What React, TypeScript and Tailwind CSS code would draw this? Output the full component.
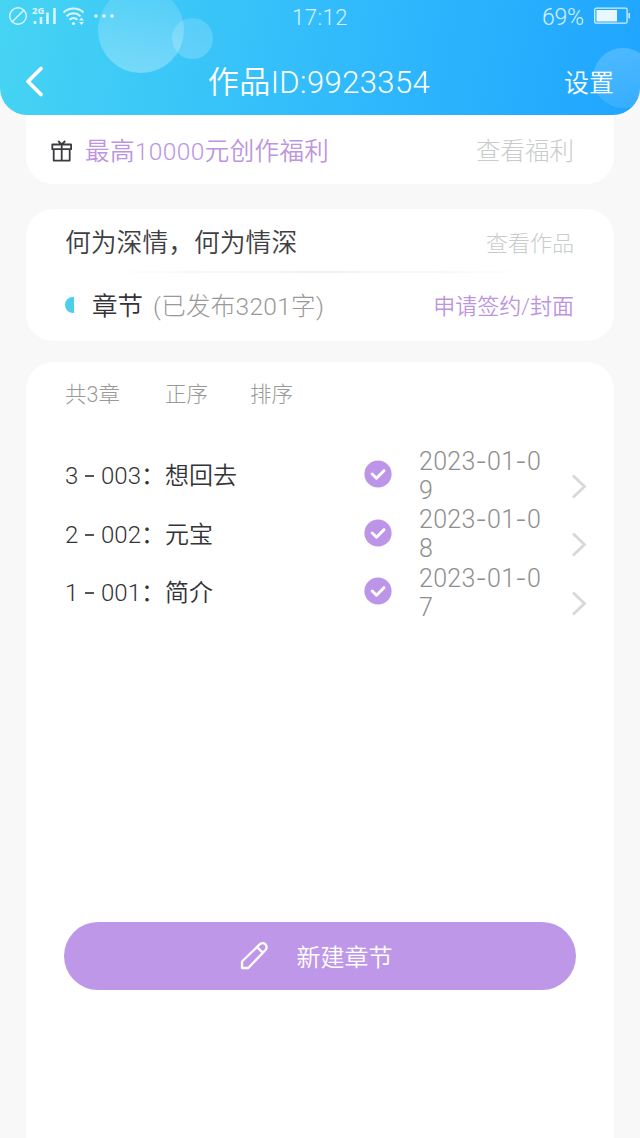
import type { ReactNode } from "react";

const chapters = [
    { order: "3", no: "003", title: "想回去", date: "2023-01-09" },
    { order: "2", no: "002", title: "元宝", date: "2023-01-08" },
    { order: "1", no: "001", title: "简介", date: "2023-01-07" },
];

function StatusBar() {
    return (
        <div className="flex h-8 items-center text-white/80 relative">
            <svg className="ml-[8px]" width="110" height="32" viewBox="0 0 110 32" fill="none" stroke="currentColor">
                <circle cx="10" cy="16" r="8.3" strokeWidth="1.4" />
                <path d="M4.5 21.5 15.5 10.5" strokeWidth="1.4" />
                {/* Signal */}
                <path d="M27 21v3M33 17v7M39.5 12.5V24M46.5 8v16" strokeWidth="2.6" />
                <text x="24" y="14" fontSize="9.5" fontWeight="700" fill="currentColor" stroke="none" className="font-['Open_Sans',sans-serif]">2G</text>
                {/* Wifi */}
                <path d="M55.5 12.5c5.5-5.3 14.5-5.3 20 0" strokeWidth="2" />
                <path d="M58.5 16.2c4-3.8 10-3.8 14 0" strokeWidth="2" />
                <path d="M61.5 19.8c2.4-2.2 5.6-2.2 8 0" strokeWidth="2" />
                <circle cx="65.5" cy="23.5" r="1.6" fill="currentColor" stroke="none" />
                <path d="m71 20.5 2.5-3 2.5 3zM71 22l2.5 3 2.5-3z" fill="currentColor" stroke="none" />
                {/* More */}
                <g fill="currentColor" stroke="none">
                    <circle cx="88" cy="16" r="1.8" />
                    <circle cx="96" cy="16" r="1.8" />
                    <circle cx="104" cy="16" r="1.8" />
                </g>
            </svg>
            <div className="w-[404px] text-center text-[22px] leading-8 tracking-[0.5px] pt-[3px]">17:12</div>
            <div className="ml-[20px] w-[46px] whitespace-nowrap text-[23px] leading-8 tracking-[-0.2px] pt-[3px]">69%</div>
            <svg className="ml-[6px]" width="38" height="18" viewBox="0 0 38 18" fill="none">
                <rect x="0.7" y="1.2" width="32.4" height="15" rx="1.5" stroke="currentColor" strokeWidth="1.3" />
                <rect x="2.5" y="3" width="20.5" height="11.5" fill="white" fillOpacity="0.9" />
                <path d="M35.2 6v5.5" stroke="currentColor" strokeWidth="1.5" />
            </svg>
        </div>
    );
}

function Header() {
    return (
        <header className="relative h-[115px] overflow-hidden rounded-b-[27px] bg-[linear-gradient(100deg,#46d4f3_0%,#33bdfb_48%,#1fa5ff_100%)] text-white">
            {/* Bubbles */}
            <div className="absolute left-[98px] top-[-13px] size-[86px] rounded-full bg-linear-to-b from-white/10 to-white/30" />
            <div className="absolute left-[172px] top-[18px] size-[41px] rounded-full bg-linear-to-b from-white/15 to-white/20" />
            <div className="absolute left-[593px] top-[48px] size-[60px] rounded-full bg-linear-to-b from-white/20 to-white/10" />

            <StatusBar />
            <div className="relative flex h-[83px] items-center justify-between pl-[24px] pr-[26px] pt-[17px]">
                <svg className="mr-[13px]" width="37" height="34" viewBox="0 0 37 34" fill="none" stroke="white" strokeWidth="3.8" strokeLinecap="round" strokeLinejoin="round">
                    <path d="M17 3.5 4 16.5l13 13" />
                </svg>
                <h1 className="whitespace-nowrap pt-[2px] text-[31px] leading-10 tracking-[0.4px] font-[350]">作品ID:9923354</h1>
                <span className="pt-[4px] text-[25px] font-[350]">设置</span>
            </div>
        </header>
    );
}

function Card({ className, children }: { className: string; children: ReactNode }) {
    return <section className={`mx-[26px] bg-white ${className}`}>{children}</section>;
}

function GiftIcon() {
    return (
        <svg width="22" height="23" viewBox="0 0 22 23" fill="none" stroke="#3b3b42" strokeWidth="1.8" strokeLinejoin="round">
            <path d="M1.3 4.5h18.8v4.7H1.3zM2.7 9.2v11.4h16V9.2M10.7 4.5v16M7.2 1 10.7 4.5 14.2 1" />
        </svg>
    );
}

function CheckIcon() {
    return (
        <svg className="shrink-0" width="28" height="28" viewBox="0 0 28 28" fill="none">
            <circle cx="14" cy="14" r="13.6" fill="#bd95e8" />
            <path d="m8.2 14 4.3 4.2 7.5-7.5" stroke="white" strokeWidth="3" strokeLinecap="round" strokeLinejoin="round" />
        </svg>
    );
}

function ChapterDate({ date }: { date: string }) {
    return (
        <div className="ml-[27px] w-[127px] break-all text-[25px] leading-[29px] tracking-[0.25px] text-[#8e8e8e]">
            {date.split("").map((char, i) => (
                <span key={i} className={char === "-" ? "font-['Inter',sans-serif]" : undefined}>{char}</span>
            ))}
        </div>
    );
}

export default function App() {
    return (
        <div className="flex h-[1138px] w-[640px] flex-col overflow-hidden bg-[#f8f8f8] font-['Roboto','Noto_Sans_CJK_SC',sans-serif] font-light">
            <Header />

            <Card className="flex h-[69px] items-center rounded-b-[27px] pl-[25px] pr-[40px] pt-[3px] text-[24.5px]">
                <GiftIcon />
                <span className="ml-[12px] pt-[2px] tracking-[0.4px] text-[#bd95df] font-[350]">最高10000元创作福利</span>
                <span className="ml-auto pt-[2px] text-[#c9cccc]">查看福利</span>
            </Card>

            <Card className="mt-[25px] h-[132px] rounded-[27px] pl-[39px] pr-[40px]">
                <div className="flex h-[62px] items-center justify-between pt-[6px]">
                    <h2 className="text-[25.8px] font-[350] text-[#3f3f44]">何为深情，何为情深</h2>
                    <span className="text-[22px] text-[#c9cccc]">查看作品</span>
                </div>
                <div className="mx-[38px] h-[2px] bg-linear-to-r from-transparent via-[#f1f1f1] to-transparent" />
                <div className="flex h-[66px] items-center">
                    <span className="h-[16px] w-[9px] rounded-l-full bg-[#4ccfea] mb-[3px]" />
                    <span className="ml-[18px] text-[25.5px] font-[350] text-[#333338] pt-px">章节</span>
                    <span className="ml-[10px] pt-[2px] text-[24.5px] tracking-[0.3px] text-[#999]">(已发布3201字)</span>
                    <span className="ml-auto text-[22px] text-[#bd95df] font-[350]">申请签约/封面</span>
                </div>
            </Card>

            <Card className="mt-[21px] flex-1 rounded-t-[27px]">
                <div className="flex h-[64px] items-center pl-[39px] pt-[2px] text-[21.5px] text-[#999]">
                    <span className="w-[100px]">共3章</span>
                    <span className="w-[85px]">正序</span>
                    <span>排序</span>
                </div>

                <div className="mt-[21px] h-[475px]">
                    {chapters.map((chapter) => (
                        <div key={chapter.no} className="flex h-[58.4px] pl-[39px]">
                            <div className="flex w-[299px] items-center font-[350] text-[24px] text-[#333338]">
                                <span className="w-[20px]">{chapter.order}</span>
                                <span className="mr-[7px] h-[2px] w-[9px] bg-[#55555a]" />
                                <span className="w-[40px]">{chapter.no}</span>
                                <span>：{chapter.title}</span>
                            </div>
                            <div className="flex items-center pb-[4px]"><CheckIcon /></div>
                            <ChapterDate date={chapter.date} />
                            <svg className="ml-[25px] mt-[26px]" width="16" height="27" viewBox="0 0 16 27" fill="none" stroke="#d8d8d8" strokeWidth="2.8">
                                <path d="m2 2.5 11.5 11L2 24.5" />
                            </svg>
                        </div>
                    ))}
                </div>

                <button className="mx-[38px] flex h-[68px] w-[512px] items-center justify-center gap-[28px] rounded-full bg-[#bf97e9] pr-[8px] text-[24px] text-white">
                    <svg width="29" height="29" viewBox="0 0 29 29" fill="none" stroke="white" strokeWidth="2.3" strokeLinejoin="round">
                        <path d="M2 26v-6.5L19.7 2.4a3.8 3.8 0 0 1 5.8 5.6L8.3 26zM17.2 5.2l5.4 5.4" />
                    </svg>
                    <span className="pt-[3px] font-[350]">新建章节</span>
                </button>
            </Card>
        </div>
    );
}
